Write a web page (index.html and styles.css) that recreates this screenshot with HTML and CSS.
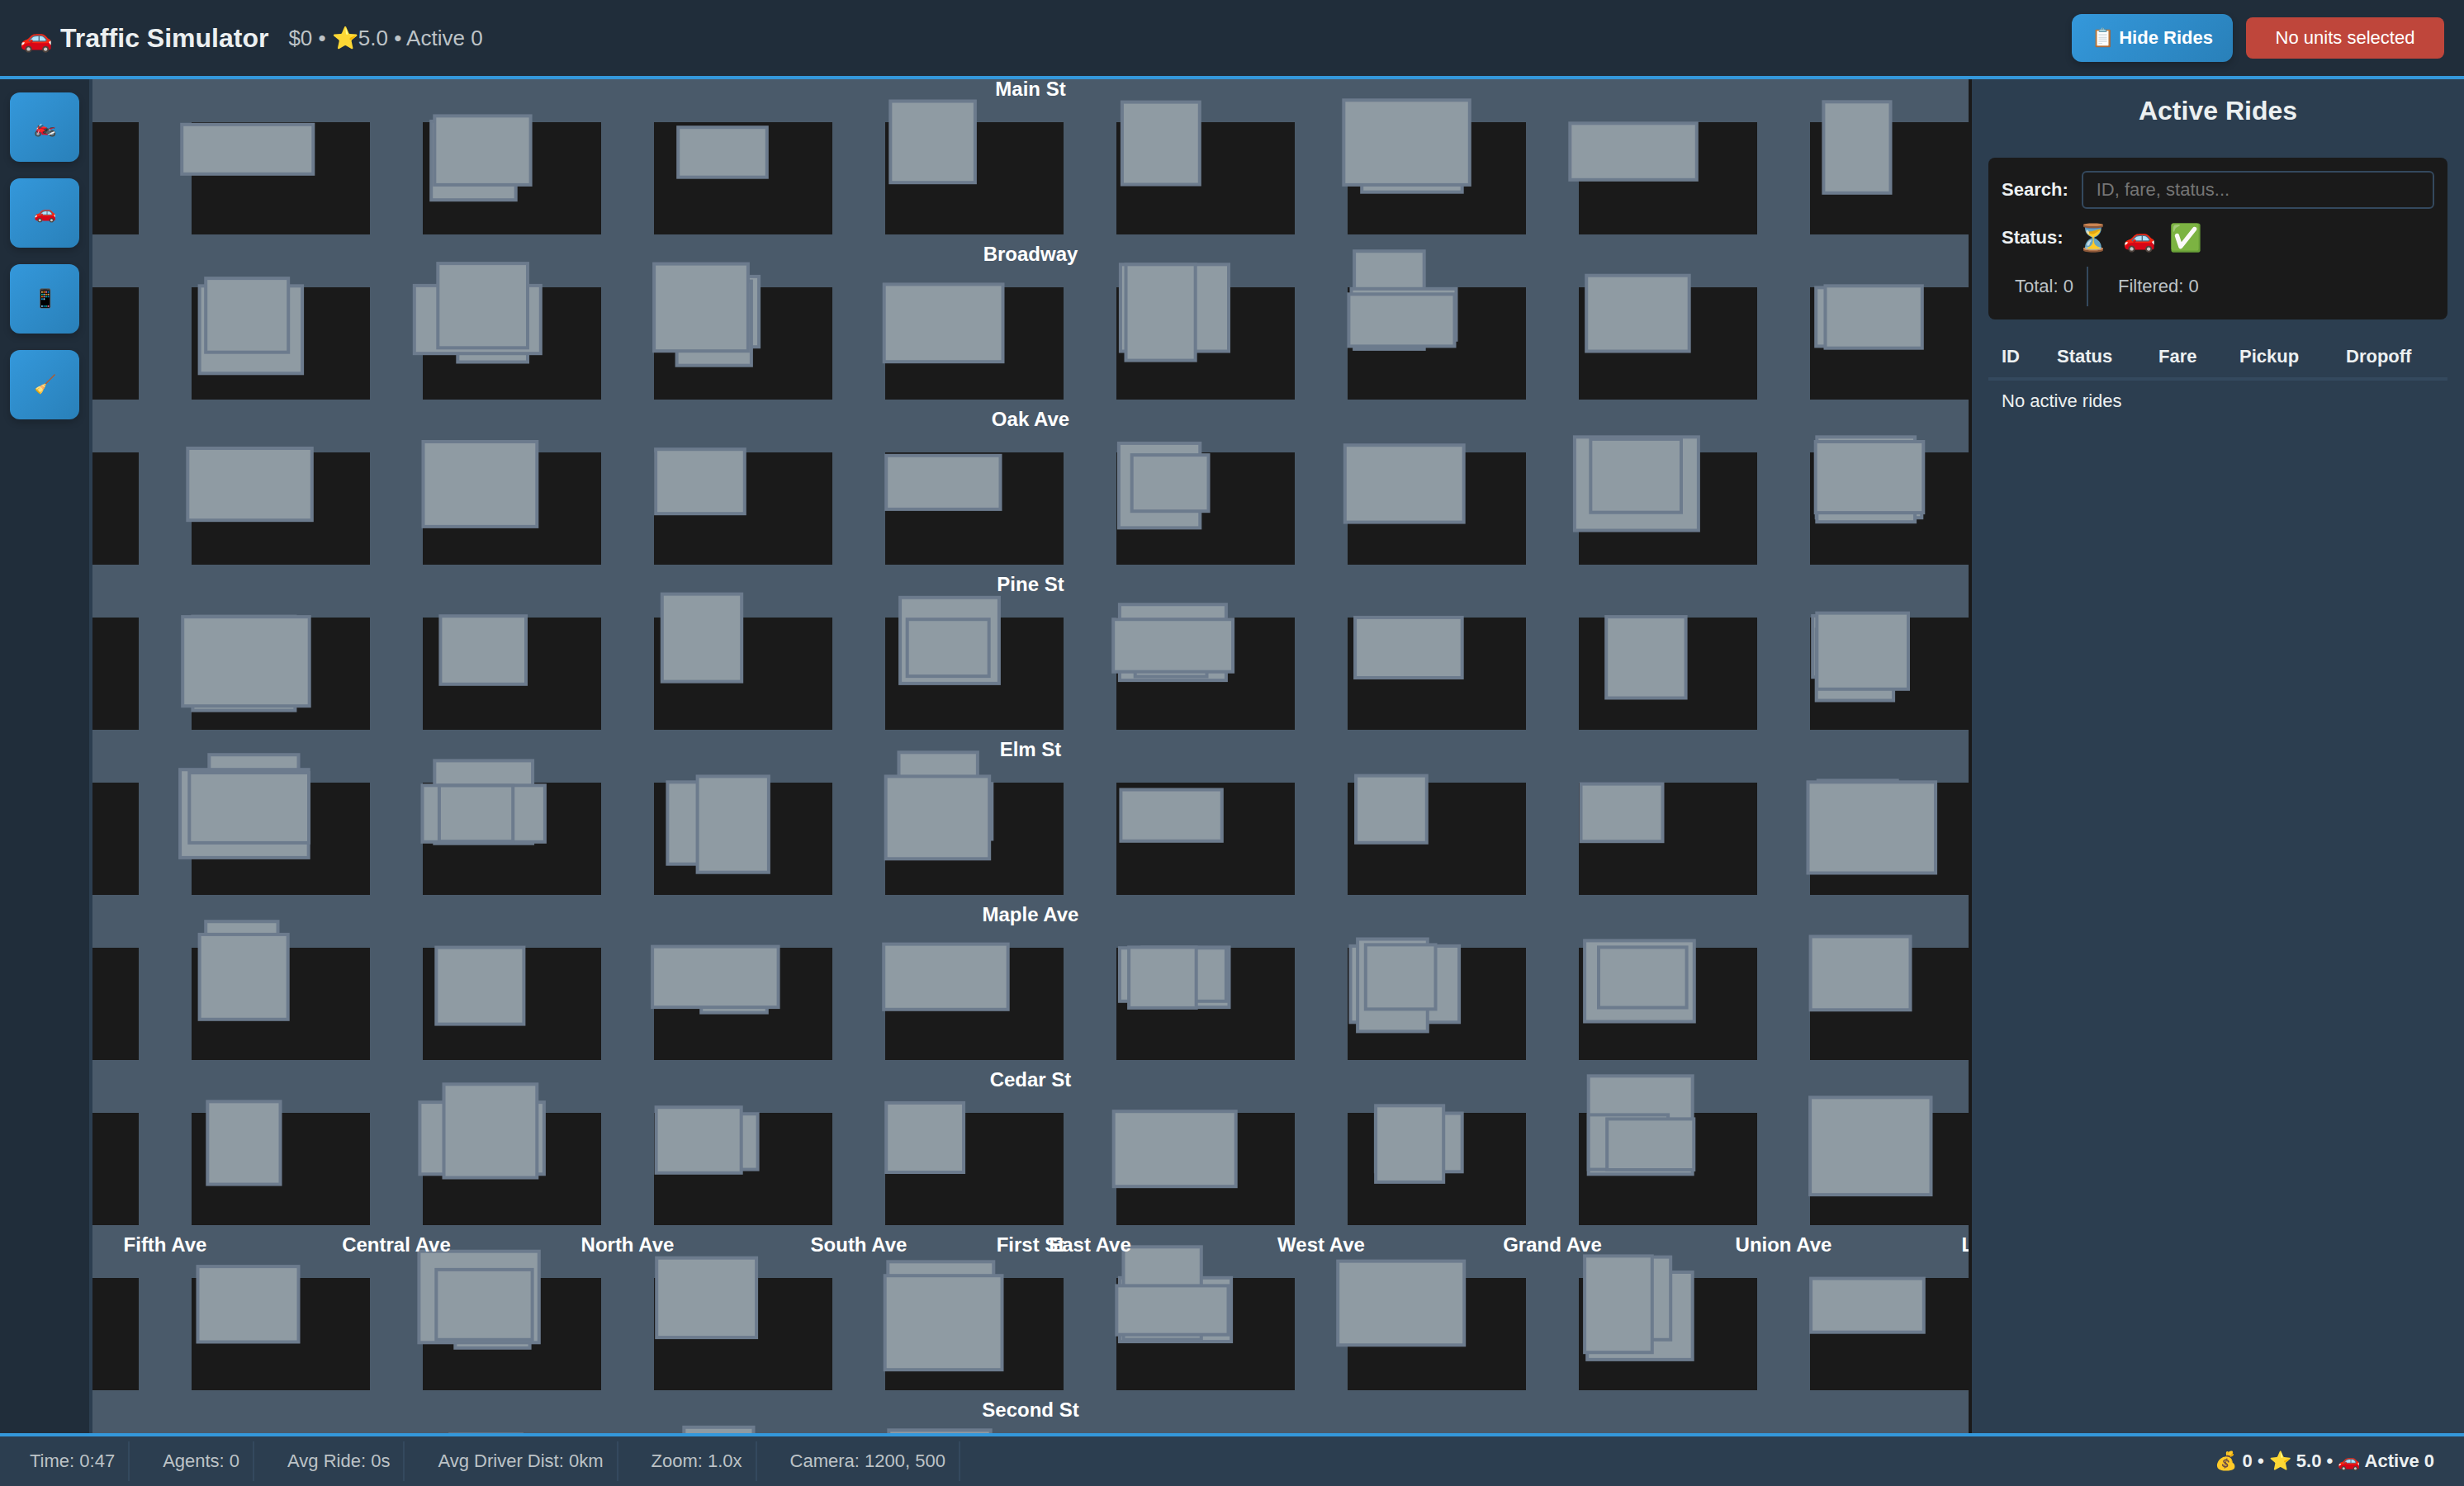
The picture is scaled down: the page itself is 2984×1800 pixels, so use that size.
FILE: index.html
```html
<!DOCTYPE html>
<html lang="en">
<head>
<meta charset="utf-8">
<title>Traffic Simulator</title>
<link rel="stylesheet" href="styles.css">
</head>
<body>
<div class="app">
  <header class="topbar">
    <h1 class="topbar-title">🚗 Traffic Simulator</h1>
    <div class="topbar-stats">$0 • ⭐5.0 • Active 0</div>
    <div class="topbar-actions">
      <button class="btn btn-primary" type="button">📋 Hide Rides</button>
      <div class="selection">No units selected</div>
    </div>
  </header>
  <main class="workspace">
    <nav class="sidebar">
      <button class="tool" type="button">🏍️</button>
      <button class="tool" type="button">🚗</button>
      <button class="tool" type="button">📱</button>
      <button class="tool" type="button">🧹</button>
    </nav>
    <section class="map">
      <svg class="city" viewBox="112 96 2272 1640" width="2272" height="1640">
        <g id="blocks" class="blocks"></g>
        <g id="buildings" class="buildings"></g>
        <g id="labels" class="labels"></g>
      </svg>
    </section>
    <aside class="panel">
      <h2 class="panel-title">Active Rides</h2>
      <div class="filters">
        <div class="filter-row">
          <label class="filter-label" for="search">Search:</label>
          <input class="search" id="search" type="text" placeholder="ID, fare, status...">
        </div>
        <div class="filter-row">
          <span class="filter-label">Status:</span>
          <span class="status-icon">⏳</span>
          <span class="status-icon">🚗</span>
          <span class="status-icon">✅</span>
        </div>
        <div class="counts">
          <span class="stat">Total: 0</span>
          <span class="stat">Filtered: 0</span>
        </div>
      </div>
      <div class="rides">
        <div class="rides-head">
          <span>ID</span><span>Status</span><span>Fare</span><span>Pickup</span><span>Dropoff</span>
        </div>
        <div class="rides-empty">No active rides</div>
      </div>
    </aside>
  </main>
  <footer class="statusbar">
    <span class="stat">Time: 0:47</span>
    <span class="stat">Agents: 0</span>
    <span class="stat">Avg Ride: 0s</span>
    <span class="stat">Avg Driver Dist: 0km</span>
    <span class="stat">Zoom: 1.0x</span>
    <span class="stat">Camera: 1200, 500</span>
    <span class="summary">💰 0 • ⭐ 5.0 • 🚗 Active 0</span>
  </footer>
</div>
<script src="map.js"></script>
</body>
</html>
```
FILE: styles.css
```css
* {
  box-sizing: border-box;
}

body {
  margin: 0;
  background: #1a1a1a;
  color: #ecf0f1;
  font: 22px "Liberation Sans", Arial, sans-serif;
}

.app {
  display: flex;
  flex-direction: column;
  width: 2984px;
  height: 1800px;
  overflow: hidden;
}

.topbar {
  display: flex;
  align-items: center;
  gap: 24px;
  height: 96px;
  padding: 0 24px;
  background: #202d3a;
  border-bottom: 4px solid #3498db;
}

.topbar-title {
  margin: 0;
  font-size: 32px;
  font-weight: bold;
}

.topbar-stats {
  color: #bdc3c7;
  font-size: 26px;
}

.topbar-actions {
  display: flex;
  align-items: center;
  gap: 16px;
  margin-left: auto;
}

.btn {
  display: flex;
  align-items: center;
  justify-content: center;
  width: 195px;
  height: 58px;
  padding: 0;
  border: 0;
  border-radius: 12px;
  color: #fff;
  font: bold 22px "Liberation Sans", Arial, sans-serif;
  white-space: pre;
}

.btn-primary,
.tool {
  background: linear-gradient(135deg, #3498db, #2980b9);
  box-shadow: 0 4px 8px rgba(0, 0, 0, 0.2);
}

.selection {
  width: 240px;
  height: 50px;
  border-radius: 8px;
  background: rgba(231, 76, 60, 0.8);
  color: #fff;
  line-height: 50px;
  text-align: center;
}

.workspace {
  display: flex;
  height: 1640px;
}

.sidebar {
  display: flex;
  flex-direction: column;
  gap: 20px;
  width: 112px;
  padding: 16px 12px;
  background: #202d3a;
  border-right: 4px solid #2c3e50;
}

.tool {
  display: flex;
  align-items: center;
  justify-content: center;
  width: 84px;
  height: 84px;
  padding: 0;
  border: 0;
  border-radius: 12px;
  font: 22px "Liberation Sans", Arial, sans-serif;
}

.map {
  width: 2276px;
  background: #1a1a1a;
}

.city {
  display: block;
  background: #4a5a6a;
}

.blocks {
  fill: #1a1a1a;
}

.buildings {
  fill: #8f9ba3;
  stroke: #6c7b8d;
  stroke-width: 4px;
}

.labels {
  fill: #fff;
  font: bold 24px "Liberation Sans", Arial, sans-serif;
  text-anchor: middle;
}

.panel {
  width: 596px;
  padding: 20px;
  background: #2c3e50;
}

.panel-title {
  margin: 0 0 39px;
  font-size: 32px;
  line-height: 36px;
  text-align: center;
}

.filters {
  display: flex;
  flex-direction: column;
  gap: 16px;
  padding: 16px;
  border-radius: 8px;
  background: #1a1a1a;
}

.filter-row {
  display: flex;
  align-items: center;
  gap: 16px;
}

.filter-row:nth-child(2) {
  height: 38px;
}

.filter-label {
  font-weight: bold;
}

.search {
  flex: 1;
  height: 46px;
  padding: 0 16px;
  border: 2px solid #34495e;
  border-radius: 6px;
  background: #1a1a1a;
  color: #ecf0f1;
  font: 22px "Liberation Sans", Arial, sans-serif;
}

.search::placeholder {
  color: #757575;
}

.status-icon {
  font-size: 32px;
  line-height: 38px;
}

.stat {
  height: 48px;
  padding: 0 16px;
  border-right: 2px solid #34495e;
  color: #bdc3c7;
  line-height: 48px;
}

.counts {
  display: flex;
  gap: 20px;
}

.counts .stat:last-child {
  border-right: 0;
}

.rides {
  margin-top: 18px;
}

.rides-head {
  display: grid;
  grid-template-columns: 67px 123px 98px 129px 1fr;
  align-items: center;
  height: 56px;
  padding: 2px 0 0 16px;
  border-bottom: 4px solid #34495e;
  font-weight: bold;
}

.rides-empty {
  padding-left: 16px;
  line-height: 50px;
}

.statusbar {
  display: flex;
  align-items: center;
  gap: 24px;
  height: 64px;
  padding: 0 20px;
  background: #2c3e50;
  border-top: 4px solid #3498db;
}

.summary {
  margin-left: auto;
  padding: 0 16px;
  font-weight: bold;
}
```
FILE: map.js
```js
const SVG = "http://www.w3.org/2000/svg";

function add(parentId, tag, attrs, text) {
  const el = document.createElementNS(SVG, tag);
  for (const name in attrs) el.setAttribute(name, attrs[name]);
  if (text) el.textContent = text;
  document.getElementById(parentId).appendChild(el);
}

// City blocks between the roads: 280 x 200 pitch, 64px wide roads.
for (let row = 0; row < 8; row++) {
  for (let col = 0; col < 9; col++) {
    add("blocks", "rect", { x: -48 + col * 280, y: 148 + row * 200, width: 216, height: 136 });
  }
}

// Outer edges of each building: left, top, right, bottom, in drawing order.
const buildings = [
  [217.9,148.5,381.6,213.1],
  [519.9,144.6,627,244.5],[524,138.1,644.9,226.2],
  [239.3,344,368.4,454.6],[246.9,334.8,351.5,429],
  [552,360,641.3,440.8],[499.5,343.6,657.1,430.5],[528,316.8,641.3,423.6],
  [225,540.7,380.1,632.5],
  [510.2,532.7,652.6,640.2],
  [231.1,744.3,359.7,862.9],[218.9,744.8,377,857.5],
  [531.1,743.9,639.3,831.1],
  [251,911.9,363.8,1000],[215.8,929.9,376,1041.2],[227,933.7,376.3,1023.2],
  [524,919.1,647.4,1024],[509.2,949,662.2,1022.1],[529.6,949.2,623.5,1021.5],
  [246.9,1113.9,338.8,1200],[239.3,1129.6,351,1237.1],
  [526,1145.3,636.7,1242.9],
  [249,1332,341.8,1436.9],
  [506.1,1332.8,661.2,1424.6],[535.2,1311,652.6,1428.8],
  [237.2,1531.8,363.8,1627.8],
  [549,1560,643.9,1635.1],[505.1,1513.4,655.1,1628.6],[526,1535.6,646.9,1625.1],
  [542.9,1735,634.2,1790],

  [818.9,151.9,931.1,217],
  [830,332.6,921.4,422.5],[817.3,338.3,912.2,445],[789.8,317.3,908.2,427.5],
  [791.8,541.9,904.1,624.5],
  [799.5,717.3,900.5,827.9],
  [806.1,945,880,1049],[842.3,938.1,933.2,1059],
  [846.9,1160,931.1,1228.9],[787.8,1144.3,944.9,1222.4],
  [830,1346.9,919.9,1418.9],[792.3,1338.9,900,1423.1],
  [792.9,1521.4,918.4,1622.4],
  [826,1726.5,914.8,1790],

  [1076,120.2,1183.2,223.5],
  [1068.4,342.1,1216.8,440.5],
  [1070.9,549.5,1213.8,619.2],
  [1087.8,721.5,1212.2,830.2],[1096.4,747.9,1200,821.4],
  [1086.2,909,1186.2,1000],[1100,946.9,1203.6,1018.8],[1070.4,938.1,1200.5,1042.6],
  [1067.9,1141.3,1223,1225.1],
  [1070.9,1333.6,1169.4,1422.3],
  [1073,1526,1205.6,1600],[1069.4,1542.9,1215.8,1661.5],
  [1074,1730,1202,1790],

  [1356.6,121.3,1455.1,225.8],
  [1354.6,318,1490.3,427.8],[1361.2,318,1450,438.9],
  [1352.6,534.6,1455.6,641.7],[1368.4,548.8,1465.8,621.5],
  [1353.6,729.9,1487.2,826.4],[1372.4,760,1463.8,821.8],[1345.9,747.9,1495.4,816],
  [1355.1,954.2,1482.1,1021.1],
  [1381,1145.1,1490.8,1222.4],[1353.6,1145.9,1487.2,1215.1],[1364.8,1145.1,1451,1223.2],
  [1346.4,1343.9,1499,1439.5],
  [1353.6,1545.5,1493.4,1627.4],[1358.2,1508,1457.1,1624.8],[1350,1555.1,1489.8,1619],

  [1646.9,180,1773,235],[1625,119,1782.1,226.2],
  [1637.8,301.9,1727,425.2],[1634.2,347.5,1765.8,414.1],[1631.1,354,1763.8,421.7],
  [1626.5,536.9,1775,634.9],
  [1638.8,745.6,1773,823.3],
  [1639.8,937.3,1730.1,1023.1],
  [1633.2,1143.6,1769.4,1240.6],[1641.8,1135.2,1731.1,1251.7],[1651.5,1142.1,1740.8,1224.7],
  [1663.6,1346.2,1773,1421.6],[1663.8,1337,1750.5,1434.2],
  [1617.9,1525.3,1775.5,1631.6],

  [1899,147,2057.1,220.1],
  [1918.9,331.4,2048,427.8],
  [1904.6,527,2059.2,644.8],[1924,529.6,2038.3,623],
  [1942.9,744.8,2043.9,847.8],
  [1912.2,947.3,2015.8,1021.5],
  [1916.8,1137.1,2054.1,1239.8],[1933.7,1145.1,2044.9,1222.8],
  [1921.4,1301,2052,1424.6],[1921.4,1348.1,2022.4,1418.9],[1943.9,1353.1,2053.6,1419.3],
  [1919.9,1538.7,2052,1649.2],[1960,1520.3,2025.5,1625.1],[1916.8,1519.1,2003.1,1640.5],

  [2206.1,121,2291.8,236.1],
  [2196.9,346,2310,421.7],[2208.2,344,2330.1,424],
  [2197.4,540,2329.6,629.5],[2198,527,2321.4,634.5],[2196.4,532.7,2331.6,623.4],
  [2192.9,743.7,2260,822.5],[2197.4,760,2295.4,850.8],[2198,740.3,2313.3,837.1],
  [2199.5,943.1,2300,1000],[2187.2,945,2346.4,1059.8],
  [2190.3,1132.1,2315.8,1225.6],
  [2189.8,1327,2340.8,1449.5],
  [2190.8,1546.3,2332.1,1616]
];
const INSET = 2.3;
for (const [left, top, right, bottom] of buildings) {
  add("buildings", "rect", {
    x: left + INSET,
    y: top + INSET,
    width: right - left - 2 * INSET,
    height: bottom - top - 2 * INSET
  });
}

// Streets run horizontally and are named at the centre of the view.
["Main St", "Broadway", "Oak Ave", "Pine St", "Elm St", "Maple Ave", "Cedar St", "First St", "Second St"]
  .forEach((name, i) => add("labels", "text", { x: 1248, y: 116 + i * 200 }, name));

["Fifth Ave", "Central Ave", "North Ave", "South Ave", "East Ave", "West Ave", "Grand Ave", "Union Ave", "Liberty Ave"]
  .forEach((name, i) => add("labels", "text", { x: 200 + i * 280, y: 1516 }, name));
```
